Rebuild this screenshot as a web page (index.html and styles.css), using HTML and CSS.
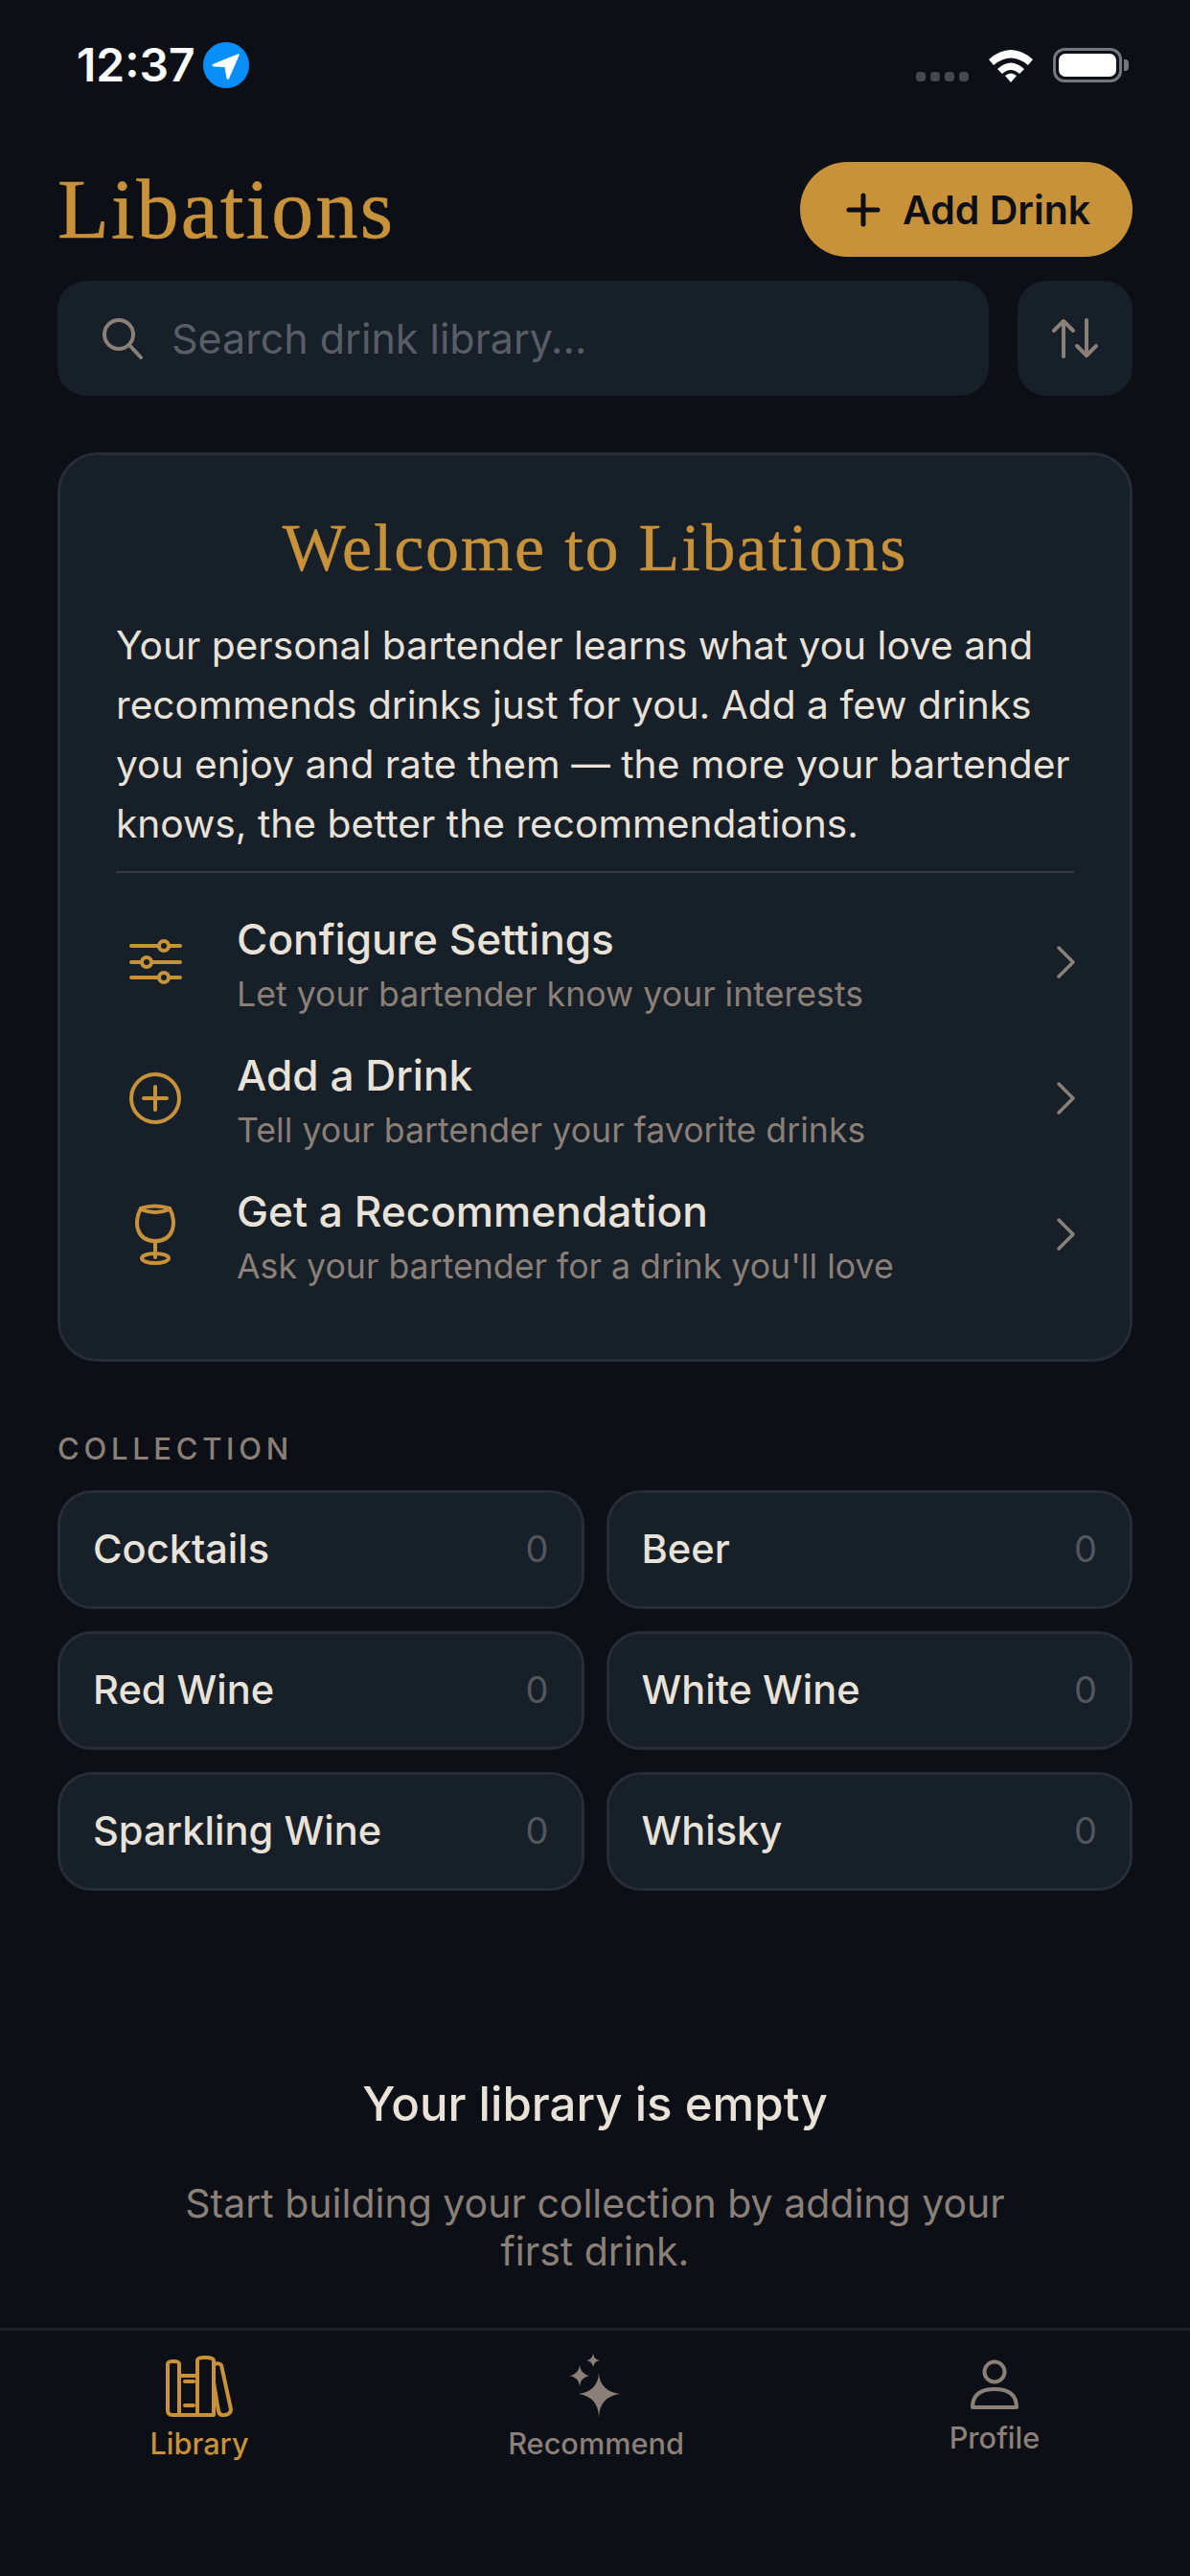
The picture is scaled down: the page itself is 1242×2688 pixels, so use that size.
FILE: index.html
```html
<!DOCTYPE html>
<html lang="en">
<head>
<meta charset="UTF-8" />
<meta name="viewport" content="width=device-width, initial-scale=1" />
<title>Libations</title>
<link rel="stylesheet" href="styles.css">
</head>
<body>
<div class="screen">

  <div class="status-bar">
    <div class="status-left">
      <span class="time">12:37</span>
      <svg class="loc" width="48" height="48" viewBox="0 0 48 48">
        <circle cx="24" cy="24" r="24" fill="#0a8ffa"/>
        <path d="M10 23 L36 12.5 Q38.5 11.5 37.5 14 L27 38 Q25.5 40 24.5 37.5 L22.5 26 L11 25.5 Q8.5 24.5 10 23 Z" fill="#fff"/>
      </svg>
    </div>
    <div class="status-right">
      <div class="signal"><i></i><i></i><i></i><i></i></div>
      <svg class="wifi" width="48" height="36" viewBox="0 0 48 36">
        <path d="M1 12 Q24 -8 47 12 L42 18 Q24 3 6 18 Z" fill="#fff"/>
        <path d="M10 22 Q24 9 38 22 L33 27 Q24 19 15 27 Z" fill="#fff"/>
        <path d="M18 29 Q24 24 30 29 L24 36 Z" fill="#fff"/>
      </svg>
      <div class="battery"><div class="battery-fill"></div></div>
      <div class="battery-cap"></div>
    </div>
  </div>

  <div class="header">
    <h1 class="logo">Libations</h1>
    <button class="add-btn">
      <svg width="36" height="36" viewBox="0 0 36 36"><path d="M18 3 V33 M3 18 H33" stroke="#0c0f16" stroke-width="5" stroke-linecap="round"/></svg>
      <span>Add Drink</span>
    </button>
  </div>

  <div class="search-row">
    <div class="search">
      <svg width="46" height="46" viewBox="0 0 46 46" fill="none" stroke="#8a8078" stroke-width="4" stroke-linecap="round"><circle cx="19" cy="19" r="15"/><path d="M30 30 L42 43"/></svg>
      <span class="placeholder">Search drink library...</span>
    </div>
    <div class="sort-btn">
      <svg width="52" height="44" viewBox="0 0 52 44" fill="none" stroke="#8a8078" stroke-width="4" stroke-linecap="round" stroke-linejoin="round"><path d="M14 41 V4 M4 14 L14 4 L24 14"/><path d="M38 3 V40 M28 30 L38 40 L48 30"/></svg>
    </div>
  </div>

  <div class="card">
    <h2 class="card-title">Welcome to Libations</h2>
    <p class="card-text">Your personal bartender learns what you love and recommends drinks just for you. Add a few drinks you enjoy and rate them — the more your bartender knows, the better the recommendations.</p>
    <div class="divider"></div>

    <div class="row">
      <div class="row-icon">
        <svg width="56" height="56" viewBox="0 0 56 56" fill="none" stroke="#c8923a" stroke-width="4" stroke-linecap="round">
          <path d="M3 11 H31 M43 11 H54 M3 28 H13 M25 28 H54 M3 44 H31 M43 44 H54"/>
          <circle cx="37" cy="11" r="5"/><circle cx="19" cy="28" r="5"/><circle cx="37" cy="44" r="5"/>
        </svg>
      </div>
      <div class="row-body">
        <div class="row-title">Configure Settings</div>
        <div class="row-sub">Let your bartender know your interests</div>
      </div>
      <svg class="chev" width="22" height="36" viewBox="0 0 22 36" fill="none" stroke="#8a8078" stroke-width="3.5" stroke-linecap="round" stroke-linejoin="round"><path d="M3 3 L18 18 L3 33"/></svg>
    </div>

    <div class="row">
      <div class="row-icon">
        <svg width="56" height="56" viewBox="0 0 56 56" fill="none" stroke="#c8923a" stroke-width="4" stroke-linecap="round">
          <circle cx="28" cy="28" r="25"/><path d="M28 16 V40 M16 28 H40"/>
        </svg>
      </div>
      <div class="row-body">
        <div class="row-title">Add a Drink</div>
        <div class="row-sub">Tell your bartender your favorite drinks</div>
      </div>
      <svg class="chev" width="22" height="36" viewBox="0 0 22 36" fill="none" stroke="#8a8078" stroke-width="3.5" stroke-linecap="round" stroke-linejoin="round"><path d="M3 3 L18 18 L3 33"/></svg>
    </div>

    <div class="row">
      <div class="row-icon">
        <svg width="42" height="64" viewBox="0 0 42 64" fill="none" stroke="#c8923a" stroke-width="4" stroke-linecap="round">
          <path d="M6 5 Q20 0 36 5 Q42 16 39 27 Q35 39 21 39 Q7 39 3 27 Q0 16 6 5 Z"/>
          <path d="M6 6 Q21 12 36 6"/>
          <path d="M21 39 V56"/>
          <ellipse cx="21" cy="57" rx="14" ry="5"/>
        </svg>
      </div>
      <div class="row-body">
        <div class="row-title">Get a Recommendation</div>
        <div class="row-sub">Ask your bartender for a drink you'll love</div>
      </div>
      <svg class="chev" width="22" height="36" viewBox="0 0 22 36" fill="none" stroke="#8a8078" stroke-width="3.5" stroke-linecap="round" stroke-linejoin="round"><path d="M3 3 L18 18 L3 33"/></svg>
    </div>
  </div>

  <div class="section-label">COLLECTION</div>
  <div class="tiles">
    <div class="tile"><span>Cocktails</span><span class="count">0</span></div>
    <div class="tile"><span>Beer</span><span class="count">0</span></div>
    <div class="tile"><span>Red Wine</span><span class="count">0</span></div>
    <div class="tile"><span>White Wine</span><span class="count">0</span></div>
    <div class="tile"><span>Sparkling Wine</span><span class="count">0</span></div>
    <div class="tile"><span>Whisky</span><span class="count">0</span></div>
  </div>

  <div class="empty">
    <div class="empty-title">Your library is empty</div>
    <div class="empty-text">Start building your collection by adding your first drink.</div>
  </div>

  <div class="tabbar">
    <div class="tab tab-library">
      <svg width="70" height="64" viewBox="0 0 70 64" fill="none" stroke="#c8923a" stroke-width="4" stroke-linecap="round" stroke-linejoin="round">
        <path d="M2 9 Q2 6 8 6 Q14 6 14 9 V62 H7 Q2 62 2 57 Z"/>
        <path d="M14 21 H33 M14 62 H33"/>
        <path d="M33 5 Q33 2 41 2 Q50 2 50 5 V62 H33 Z"/>
        <path d="M50 9 Q56 7 58 10 L68 56 Q68 61 62 62 Q56 63 55 58 L50 28"/>
        <path d="M20 27 H29 M20 52 H29"/>
      </svg>
      <span>Library</span>
    </div>
    <div class="tab tab-recommend">
      <svg width="54" height="66" viewBox="0 0 54 66" fill="#8a8078">
        <path d="M30 20 Q31 39 52 42 Q31 45 30 66 Q29 45 9 42 Q29 39 30 20 Z"/>
        <path d="M10 12 Q11 21 20 23 Q11 25 10 34 Q9 25 0 23 Q9 21 10 12 Z"/>
        <path d="M24 0 Q25 6 31 7 Q25 8 24 14 Q23 8 17 7 Q23 6 24 0 Z"/>
      </svg>
      <span>Recommend</span>
    </div>
    <div class="tab tab-profile">
      <svg width="52" height="54" viewBox="0 0 52 54" fill="none" stroke="#8a8078" stroke-width="4" stroke-linecap="round" stroke-linejoin="round">
        <circle cx="26" cy="13" r="10.5"/>
        <path d="M3 50 Q3 31 26 31 Q49 31 49 50 Z"/>
      </svg>
      <span>Profile</span>
    </div>
  </div>

</div>
</body>
</html>
```

FILE: styles.css
```css
body {
  margin: 0;
  background: #0c0f16;
  font-family: Inter, 'Noto Sans', sans-serif;
  color: #e9e2d8;
}
.screen {
  width: 1242px;
  height: 2688px;
  display: flex;
  flex-direction: column;
  padding: 0 60px;
  box-sizing: border-box;
  overflow: hidden;
}

/* status bar */
.status-bar {
  height: 169px;
  margin: 0 -60px;
  padding: 44px 64px 0 80px;
  box-sizing: border-box;
  display: flex;
  justify-content: space-between;
  align-items: flex-start;
}
.status-left {
  display: flex;
  align-items: center;
  gap: 8px;
}
.time {
  font-size: 48px;
  font-weight: 600;
  line-height: 48px;
  color: #fff;
}
.status-right {
  display: flex;
  align-items: flex-end;
  padding-top: 6px;
}
.signal {
  display: flex;
  gap: 5px;
  margin-right: 20px;
  margin-bottom: 1px;
}
.signal i {
  display: block;
  width: 10px;
  height: 10px;
  border-radius: 4px;
  background: #45484e;
}
.wifi {
  margin-right: 20px;
}
.battery {
  width: 72px;
  height: 36px;
  border: 3px solid #75777c;
  border-radius: 12px;
  padding: 3px;
  box-sizing: border-box;
}
.battery-fill {
  height: 100%;
  background: #fff;
  border-radius: 7px;
}
.battery-cap {
  width: 5px;
  height: 12px;
  margin: 0 0 12px 2px;
  background: #75777c;
  border-radius: 0 4px 4px 0;
}

/* header */
.header {
  display: flex;
  justify-content: space-between;
  align-items: center;
  height: 99px;
}
.logo {
  margin: 0;
  font-family: 'Liberation Serif', serif;
  font-weight: 400;
  font-size: 88px;
  letter-spacing: 2.2px;
  -webkit-text-stroke: 0.6px #c8923a;
  color: #c8923a;
}
.add-btn {
  width: 347px;
  height: 99px;
  border: none;
  border-radius: 50px;
  background: #c8923a;
  display: flex;
  align-items: center;
  justify-content: center;
  gap: 23px;
  font-family: inherit;
  font-size: 41px;
  font-weight: 600;
  color: #0c0f16;
  padding: 0 0 0 4px;
}

/* search */
.search-row {
  display: flex;
  gap: 30px;
  margin-top: 25px;
}
.search {
  flex: 1;
  height: 120px;
  background: #171f29;
  border-radius: 30px;
  display: flex;
  align-items: center;
  gap: 28px;
  padding-left: 45px;
}
.placeholder {
  font-size: 43px;
  color: #585d66;
}
.sort-btn {
  width: 120px;
  height: 120px;
  background: #171f29;
  border-radius: 30px;
  display: flex;
  align-items: center;
  justify-content: center;
}

/* welcome card */
.card {
  margin-top: 59px;
  height: 949px;
  box-sizing: border-box;
  background: #171f29;
  border: 3px solid #262d37;
  border-radius: 42px;
  padding: 58px 58px 0;
}
.card-title {
  margin: 0;
  text-align: center;
  font-family: 'Liberation Serif', serif;
  font-weight: 400;
  font-size: 70px;
  letter-spacing: 1.8px;
  line-height: 78px;
  -webkit-text-stroke: 0.4px #c8923a;
  color: #c8923a;
}
.card-text {
  margin: 32px 0 0;
  font-size: 40.7px;
  line-height: 62px;
}
.divider {
  height: 2px;
  background: #343b46;
  margin-top: 18px;
  margin-bottom: 22px;
}
.row {
  display: flex;
  align-items: center;
  height: 142px;
}
.row-icon {
  width: 82px;
  margin-right: 44px;
  display: flex;
  justify-content: center;
}
.row-body {
  flex: 1;
  padding-top: 8px;
}
.row-title {
  font-size: 44.2px;
  line-height: 58px;
  font-weight: 450;
}
.row-sub {
  font-size: 35.7px;
  line-height: 56px;
  color: #8a8078;
}
.chev {
  margin-right: -3px;
}

/* collection */
.section-label {
  margin-top: 72px;
  font-size: 31px;
  line-height: 38px;
  font-weight: 500;
  letter-spacing: 4.7px;
  color: #8a8078;
}
.tiles {
  margin-top: 24px;
  display: grid;
  grid-template-columns: 1fr 1fr;
  gap: 23px;
}
.tile {
  height: 124px;
  box-sizing: border-box;
  background: #171f29;
  border: 3px solid #262d37;
  border-radius: 36px;
  padding: 0 34px 2px;
  display: flex;
  justify-content: space-between;
  align-items: center;
  font-size: 41.6px;
  font-weight: 450;
}
.count {
  font-size: 38px;
  font-weight: 400;
  color: #53565c;
}

/* empty state */
.empty {
  text-align: center;
  margin-top: 192px;
}
.empty-title {
  font-size: 49.2px;
  line-height: 60px;
  font-weight: 450;
}
.empty-text {
  width: 900px;
  margin: 49px auto 0;
  font-size: 41px;
  line-height: 50px;
  color: #8a8078;
}

/* tab bar */
.tabbar {
  margin: 55px -60px 0;
  border-top: 3px solid #1c2027;
  display: flex;
  align-items: flex-start;
  padding-top: 26px;
}
.tab {
  display: flex;
  flex-direction: column;
  align-items: center;
  gap: 9px;
  font-size: 30.7px;
  font-weight: 500;
  line-height: 38px;
  color: #8a8078;
}
.tab-library {
  margin-left: 153px;
  width: 110px;
  color: #c8923a;
}
.tab-recommend {
  margin-left: 259px;
  margin-top: -2px;
  width: 200px;
}
.tab-profile {
  margin-left: 251px;
  margin-top: 4px;
  width: 130px;
}
```
